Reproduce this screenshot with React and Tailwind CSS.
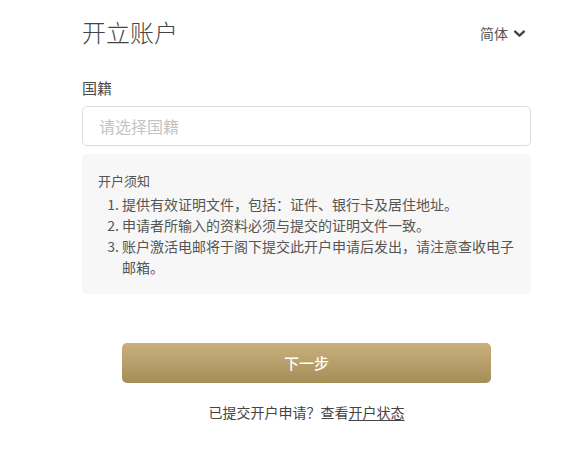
import React from "react";

const font = { fontFamily: '"Noto Sans CJK SC", "Noto Sans", sans-serif' };

export default function App() {
  return (
    <div className="w-[579px] h-[456px] bg-white overflow-hidden" style={font}>
      <div className="ml-[82px] w-[449px] pt-4 flex flex-col">
        <div className="flex items-center justify-between h-8">
          <h1 className="text-[24px] leading-8 text-[#454545] font-light">开立账户</h1>
          <div className="flex items-center gap-[5px] text-[14px] text-[#555] pr-[5px] mt-[2px]">
            <span>简体</span>
            <svg width="13" height="13" viewBox="0 0 12 12" fill="none" stroke="#444" strokeWidth="2.2" strokeLinecap="round" strokeLinejoin="round">
              <path d="M2 4.2 L6 8 L10 4.2" />
            </svg>
          </div>
        </div>
        <label className="mt-[29px] text-[15px] leading-[22px] text-[#4a4a4a]">国籍</label>
        <div className="mt-[7px] h-10 rounded-[5px] border border-[#dcdcdc] flex items-center pl-4 text-[16px] text-[#c4c4c4]">
          请选择国籍
        </div>
        <div className="mt-2 h-[140px] rounded-[5px] bg-[#f7f7f7] pt-[17px] pl-4 pr-3">
          <div className="text-[13px] leading-5 text-[#555]">开户须知</div>
          <ol className="mt-[3px] list-decimal pl-[24px] text-[14px] leading-[21px] text-[#555]">
            <li>提供有效证明文件，包括：证件、银行卡及居住地址。</li>
            <li>申请者所输入的资料必须与提交的证明文件一致。</li>
            <li>账户激活电邮将于阁下提交此开户申请后发出，请注意查收电子邮箱。</li>
          </ol>
        </div>
        <button className="mt-[49px] mx-[40px] h-10 rounded-[5px] bg-gradient-to-b from-[#c9b07d] to-[#a68d58] text-white text-[15px] font-medium">
          下一步
        </button>
        <div className="mt-[19px] text-center text-[14px] leading-5 text-[#444]">
          已提交开户申请？查看<span className="underline underline-offset-2">开户状态</span>
        </div>
      </div>
    </div>
  );
}
